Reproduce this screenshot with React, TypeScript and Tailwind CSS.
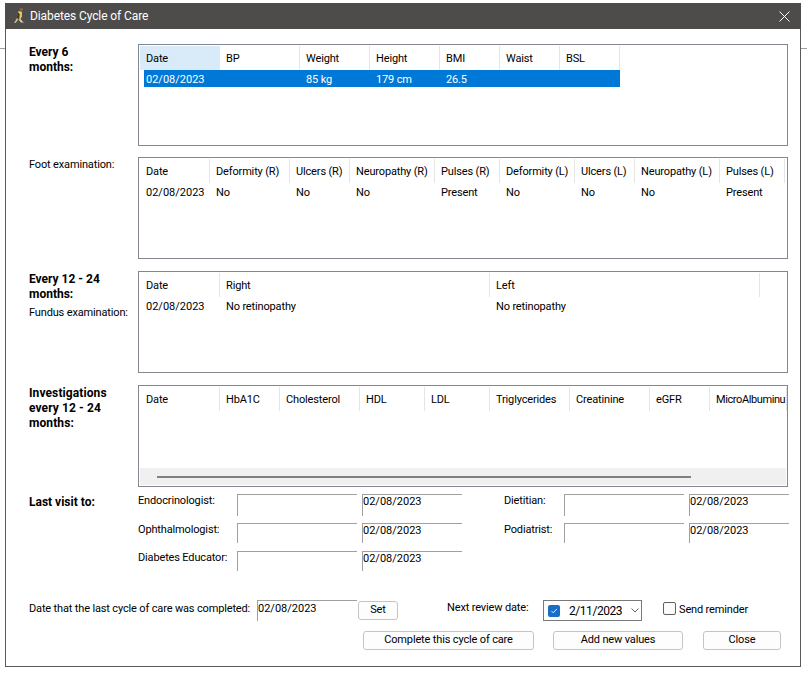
import React from "react";

type Col = { label: string; w: string; value?: string; cls?: string };

function Header({ cols, active }: { cols: Col[]; active?: boolean }) {
  return (
    <div className="flex h-6 shrink-0">
      {cols.map((c, i) => (
        <div
          key={c.label}
          className={`${c.w} ${c.cls ?? ""} shrink-0 overflow-hidden whitespace-nowrap border-r pl-[6px] pt-px leading-6 ${
            active && i === 0 ? "border-[#d9ebf9] bg-[#d9ebf9]" : "border-[#e5e5e5]"
          }`}
        >
          {c.label}
        </div>
      ))}
    </div>
  );
}

function Row({ cols, selected }: { cols: Col[]; selected?: boolean }) {
  return (
    <div className={`flex h-[17px] w-fit shrink-0 ${selected ? "ml-[4px] bg-[#0078d7] text-white" : ""}`}>
      {cols.map((c, i) => (
        <div
          key={c.label}
          className={`${selected && i === 0 ? "w-[76px] pl-[2px]" : `${c.w} pl-[6px]`} ${i === 0 ? "tracking-normal" : ""} shrink-0 whitespace-nowrap pt-px leading-[17px]`}
        >
          {c.value}
        </div>
      ))}
    </div>
  );
}

function TableBox({ children }: { children: React.ReactNode }) {
  return (
    <div className="flex h-[102px] w-[650px] flex-col overflow-hidden border border-[#828790] p-px">
      {children}
    </div>
  );
}

const six: Col[] = [
  { label: "Date", w: "w-[80px]", value: "02/08/2023" },
  { label: "BP", w: "w-[80px]" },
  { label: "Weight", w: "w-[70px]", value: "85 kg" },
  { label: "Height", w: "w-[70px]", value: "179 cm" },
  { label: "BMI", w: "w-[60px]", value: "26.5" },
  { label: "Waist", w: "w-[60px]" },
  { label: "BSL", w: "w-[60px]" },
];
const foot: Col[] = [
  { label: "Date", w: "w-[70px]", value: "02/08/2023" },
  { label: "Deformity (R)", w: "w-[80px]", value: "No" },
  { label: "Ulcers (R)", w: "w-[60px]", value: "No" },
  { label: "Neuropathy (R)", w: "w-[85px]", value: "No" },
  { label: "Pulses (R)", w: "w-[65px]", value: "Present" },
  { label: "Deformity (L)", w: "w-[75px]", value: "No" },
  { label: "Ulcers (L)", w: "w-[60px]", value: "No" },
  { label: "Neuropathy (L)", w: "w-[85px]", value: "No" },
  { label: "Pulses (L)", w: "w-[65px]", value: "Present" },
];
const fundus: Col[] = [
  { label: "Date", w: "w-[80px]", value: "02/08/2023" },
  { label: "Right", w: "w-[270px]", value: "No retinopathy" },
  { label: "Left", w: "w-[270px]", value: "No retinopathy" },
];
const inv: Col[] = [
  { label: "Date", w: "w-[80px]" },
  { label: "HbA1C", w: "w-[60px]" },
  { label: "Cholesterol", w: "w-[80px]" },
  { label: "HDL", w: "w-[65px]" },
  { label: "LDL", w: "w-[65px]" },
  { label: "Triglycerides", w: "w-[80px]" },
  { label: "Creatinine", w: "w-[80px]" },
  { label: "eGFR", w: "w-[60px]" },
  { label: "MicroAlbuminu", w: "w-[77px]", cls: "tracking-[-0.4px]" },
];

function Visit({ label, labelW, h }: { label: string; labelW: string; h: string }) {
  return (
    <div className="flex">
      <div className={`${labelW} shrink-0 whitespace-nowrap leading-[14px]`}>{label}</div>
      <div className={`w-[120px] ${h} shrink-0 border-l border-t border-[#a0a0a0]`} />
      <div className={`ml-[5px] w-[100px] ${h} shrink-0 border-l border-t border-[#a0a0a0] leading-[14px] tracking-normal`}>02/08/2023</div>
    </div>
  );
}

function Btn({ w, children, cls = "" }: { w: string; children: React.ReactNode; cls?: string }) {
  return (
    <div className={`${w} ${cls} flex h-[19px] shrink-0 items-center justify-center rounded-[3px] border border-[#c4c4c4] bg-[#fdfdfd]`}>
      {children}
    </div>
  );
}

function Bird() {
  return (
    <svg width="12" height="18" viewBox="0 0 12 18" className="shrink-0">
      <path d="M6.5 1 L9.5 1 L10 3 L9 5 L6.5 4.5 Z" fill="#6b5a48" />
      <path d="M7.6 1.6 L9.6 1.6 L9.4 3.4 L7.8 3.4 Z" fill="#c9503c" />
      <path d="M5.5 4 L9 5 L8.8 10 L6.5 13 L4.5 9 Z" fill="#e7cf5a" />
      <path d="M5 5.5 L6.8 7 L6.2 12.5 L4 10 Z" fill="#3f382c" />
      <path d="M1 16 L4 11 L5.5 12.5 L2.5 16 Z" fill="#c9b98a" />
      <path d="M7 11.5 L10 15 L11.5 15.5 L8 15.5 L6 13 Z" fill="#e3d7b4" />
    </svg>
  );
}

export default function App() {
  return (
    <div
      className="flex h-[674px] w-[807px] bg-white text-[11px] tracking-[-0.15px] text-black"
      style={{ fontFamily: "Roboto, 'Liberation Sans', sans-serif" }}
    >
      <div className="h-[49px] w-[5px] shrink-0 border-b border-[#a0a0a0]" />
      <div className="mt-[3px] flex h-[664px] w-[796px] shrink-0 flex-col border-x border-b border-[#5a5a5a] bg-white">
        <div className="-mx-px flex h-[26px] shrink-0 items-center bg-[#4d4c4a] pl-[8px] pr-[11px] text-[12px] tracking-[-0.1px] text-white">
          <Bird />
          <span className="ml-[5px]">Diabetes Cycle of Care</span>
          <svg width="11" height="11" viewBox="0 0 11 11" className="ml-auto">
            <path d="M0.5 0.5 L10.5 10.5 M10.5 0.5 L0.5 10.5" stroke="#fff" strokeWidth="1" />
          </svg>
        </div>

        <div className="flex flex-col pl-[23px] pt-[15px]">
          <div className="flex">
            <div className="w-[109px] shrink-0 pt-px text-[12px] font-bold leading-[15px] tracking-normal">
              Every 6<br />months:
            </div>
            <TableBox>
              <Header cols={six} active />
              <Row cols={six} selected />
            </TableBox>
          </div>

          <div className="mt-[11px] flex">
            <div className="w-[109px] shrink-0 pt-px leading-[14px]">Foot examination:</div>
            <TableBox>
              <Header cols={foot} />
              <Row cols={foot} />
            </TableBox>
          </div>

          <div className="mt-[12px] flex">
            <div className="w-[109px] shrink-0 whitespace-nowrap">
              <div className="pt-px text-[12px] font-bold leading-[15px] tracking-normal">
                Every 12 - 24<br />months:
              </div>
              <div className="mt-[4px] leading-[14px]">Fundus examination:</div>
            </div>
            <TableBox>
              <Header cols={fundus} />
              <Row cols={fundus} />
            </TableBox>
          </div>

          <div className="mt-[12px] flex">
            <div className="w-[109px] shrink-0 pt-px text-[12px] font-bold leading-[15px] tracking-[0.1px]">
              Investigations<br />every 12 - 24<br />months:
            </div>
            <TableBox>
              <Header cols={inv} />
              <div className="mt-auto flex h-[17px] shrink-0 items-center bg-[#f0f0f0] pl-[17px]">
                <div className="h-[2px] w-[534px] bg-[#808080]" />
              </div>
            </TableBox>
          </div>

          <div className="mt-[7px] flex">
            <div className="w-[109px] shrink-0 pt-[1px] text-[12px] font-bold leading-[15px] tracking-normal">Last visit to:</div>
            <div className="flex flex-col">
              <div className="flex h-[29px]">
                <Visit label="Endocrinologist:" labelW="w-[99px]" h="h-[22px]" />
                <div className="ml-[42px]">
                  <Visit label="Dietitian:" labelW="w-[60px]" h="h-[22px]" />
                </div>
              </div>
              <div className="flex h-[28px]">
                <Visit label="Ophthalmologist:" labelW="w-[99px]" h="h-[20px]" />
                <div className="ml-[42px]">
                  <Visit label="Podiatrist:" labelW="w-[60px]" h="h-[20px]" />
                </div>
              </div>
              <Visit label="Diabetes Educator:" labelW="w-[99px]" h="h-[20px]" />
            </div>
          </div>

          <div className="mt-[29px] flex h-[21px] items-start">
            <div className="w-[228px] shrink-0 whitespace-nowrap pt-[2px] leading-[14px]">Date that the last cycle of care was completed:</div>
            <div className="h-[21px] w-[100px] shrink-0 border-l border-t border-[#a0a0a0] pt-px leading-[14px] tracking-normal">02/08/2023</div>
            <Btn w="w-[40px]" cls="ml-[1px] mt-px">Set</Btn>
            <div className="ml-[49px] w-[96px] shrink-0 whitespace-nowrap pt-[1px] leading-[14px]">Next review date:</div>
            <div className="flex h-[21px] w-[99px] shrink-0 items-center border border-[#7a7a7a] pl-[4px]">
              <div className="flex h-[12px] w-[12px] shrink-0 items-center justify-center rounded-[2px] bg-[#1a6fc4]">
                <svg width="8" height="8" viewBox="0 0 8 8">
                  <path d="M1.5 4 L3.3 5.8 L6.8 2" fill="none" stroke="#fff" strokeWidth="0.9" />
                </svg>
              </div>
              <span className="ml-[9px] text-[12px] tracking-[-0.45px]">2/11/2023</span>
              <svg width="8" height="5" viewBox="0 0 8 5" className="ml-[9px]">
                <path d="M0.5 0.5 L4 4 L7.5 0.5" fill="none" stroke="#555" strokeWidth="0.9" />
              </svg>
            </div>
            <div className="ml-[21px] mt-[2px] h-[13px] w-[13px] shrink-0 rounded-[2px] border border-[#5f5f5f] bg-[#fbfbfb]" />
            <span className="ml-[3px] mt-[3px] whitespace-nowrap leading-[14px]">Send reminder</span>
          </div>

          <div className="mt-[10px] flex pl-[334px]">
            <Btn w="w-[171px]">Complete this cycle of care</Btn>
            <Btn w="w-[130px]" cls="ml-[19px]">Add new values</Btn>
            <Btn w="w-[78px]" cls="ml-[20px]">Close</Btn>
          </div>
        </div>
      </div>
      <div className="h-[49px] flex-1 border-b border-[#a0a0a0]" />
    </div>
  );
}
